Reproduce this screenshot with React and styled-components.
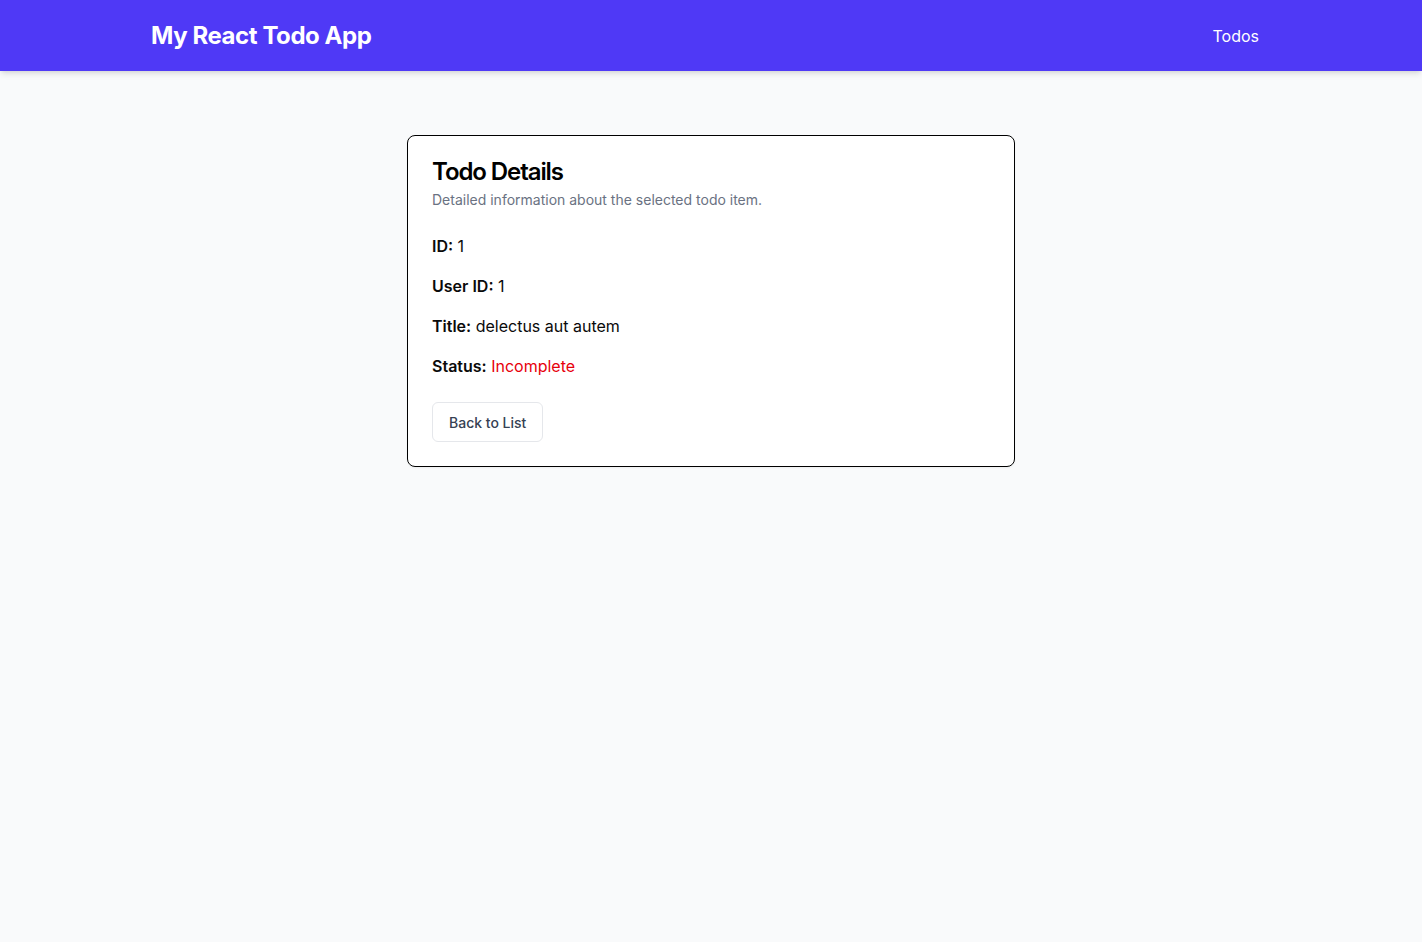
import React from 'react';
import styled, { createGlobalStyle } from 'styled-components';

const GlobalStyle = createGlobalStyle`
  * {
    box-sizing: border-box;
  }
  body {
    margin: 0;
    background: #f9fafb;
    font-family: Inter, "Noto Sans", sans-serif;
    color: #0a0a0a;
  }
`;

const Header = styled.header`
  height: 71px;
  background: #4f39f6;
  box-shadow: 0 4px 6px -1px rgba(0, 0, 0, 0.1), 0 2px 4px -2px rgba(0, 0, 0, 0.1);
`;

const Nav = styled.nav`
  max-width: 1152px;
  height: 100%;
  margin: 0 auto;
  padding: 0 16px;
  display: flex;
  justify-content: space-between;
  align-items: center;
`;

const Brand = styled.h1`
  margin: 0;
  font-size: 24px;
  line-height: 32px;
  font-weight: 700;
  letter-spacing: -0.018em;
  color: #ffffff;
`;

const NavLink = styled.a`
  padding: 0 12px;
  font-size: 16px;
  line-height: 24px;
  color: #ffffff;
  text-decoration: none;
`;

const Main = styled.main`
  display: flex;
  justify-content: center;
  padding: 64px 16px;
`;

const Card = styled.section`
  width: 608px;
  background: #ffffff;
  border: 1px solid #000000;
  border-radius: 8px;
  box-shadow: 0 1px 2px rgba(0, 0, 0, 0.05);
`;

const CardHeader = styled.div`
  display: flex;
  flex-direction: column;
  gap: 6px;
  padding: 24px;
`;

const CardTitle = styled.h2`
  margin: 0;
  font-size: 24px;
  line-height: 24px;
  font-weight: 600;
  letter-spacing: -0.045em;
  color: #000000;
`;

const CardDescription = styled.p`
  margin: 0;
  font-size: 14px;
  line-height: 20px;
  color: #6a7282;
`;

const CardContent = styled.div`
  display: flex;
  flex-direction: column;
  gap: 16px;
  padding: 0 24px 24px;
`;

const Row = styled.p`
  margin: 0;
  font-size: 16px;
  line-height: 24px;
  color: #0a0a0a;
`;

const Label = styled.strong`
  font-weight: 600;
`;

const Value = styled.span`
  color: ${(p) => p.$color || 'inherit'};
`;

const Actions = styled.div`
  margin-top: 8px;
`;

const Button = styled.button`
  height: 40px;
  padding: 0 16px;
  background: #ffffff;
  border: 1px solid #e5e7eb;
  border-radius: 6px;
  font-family: inherit;
  font-size: 14px;
  font-weight: 500;
  color: #364153;
  cursor: pointer;
`;

const todo = { id: 1, userId: 1, title: 'delectus aut autem', completed: false };

function App() {
  return (
    <>
      <GlobalStyle />
      <Header>
        <Nav>
          <Brand>My React Todo App</Brand>
          <NavLink href="#">Todos</NavLink>
        </Nav>
      </Header>
      <Main>
        <Card>
          <CardHeader>
            <CardTitle>Todo Details</CardTitle>
            <CardDescription>Detailed information about the selected todo item.</CardDescription>
          </CardHeader>
          <CardContent>
            <Row><Label>ID:</Label> {todo.id}</Row>
            <Row><Label>User ID:</Label> {todo.userId}</Row>
            <Row><Label>Title:</Label> {todo.title}</Row>
            <Row>
              <Label>Status:</Label>{' '}
              <Value $color={todo.completed ? '#00a63e' : '#e7000b'}>
                {todo.completed ? 'Completed' : 'Incomplete'}
              </Value>
            </Row>
            <Actions>
              <Button>Back to List</Button>
            </Actions>
          </CardContent>
        </Card>
      </Main>
    </>
  );
}

export default App;
